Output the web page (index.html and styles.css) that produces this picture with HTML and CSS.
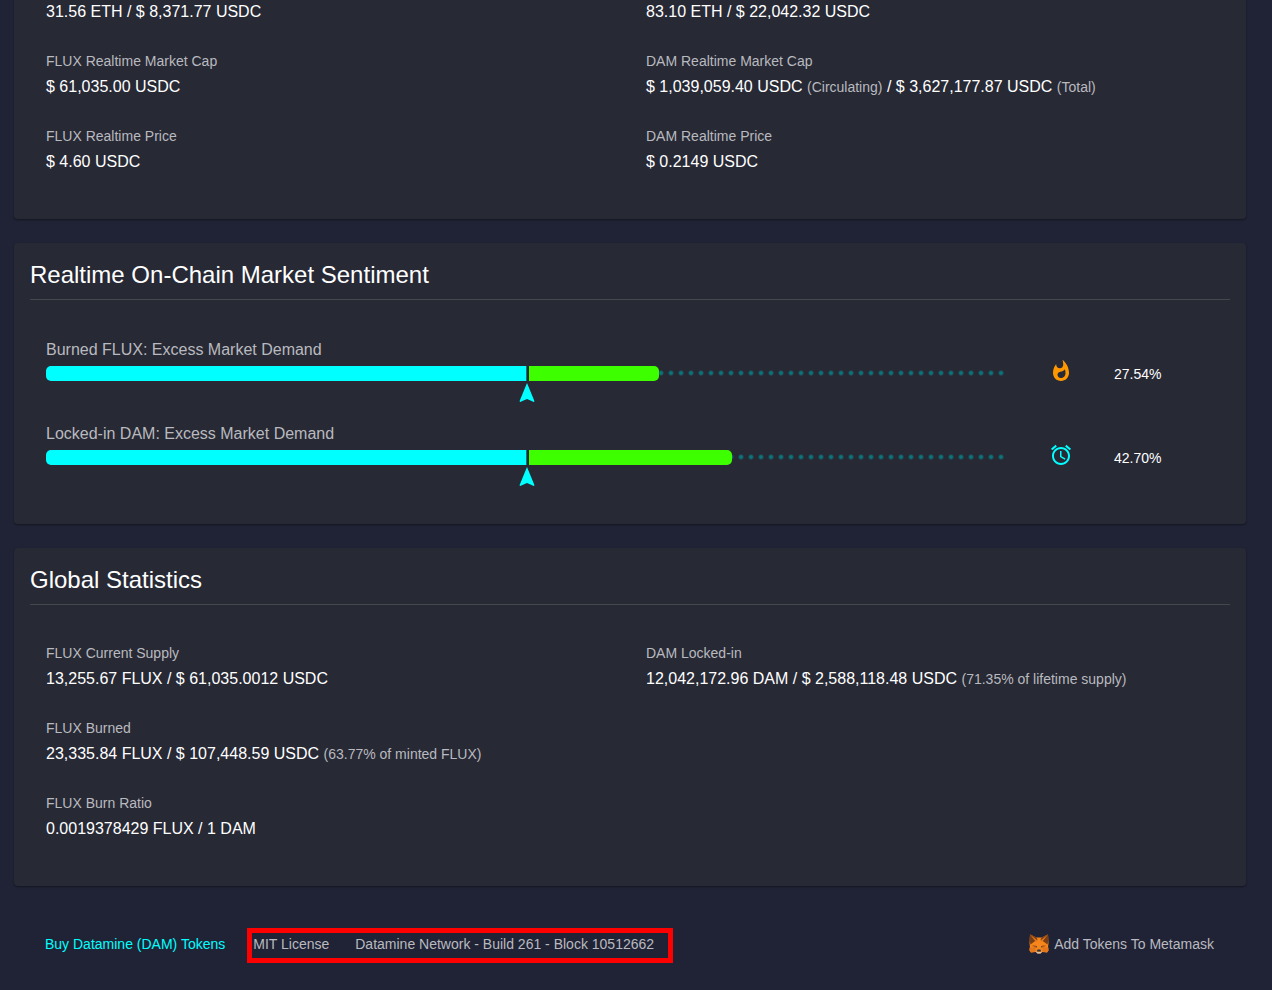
FILE: index.html
```html
<!DOCTYPE html>
<html lang="en">
<head>
<meta charset="utf-8">
<title>Datamine Network</title>
<link rel="stylesheet" href="styles.css">
</head>
<body>
<main class="page">
  <section class="card card-top">
    <div class="columns">
      <dl class="stats">
        <div class="stat"><dd>31.56 ETH / $ 8,371.77 USDC</dd></div>
        <div class="stat"><dt>FLUX Realtime Market Cap</dt><dd>$ 61,035.00 USDC</dd></div>
        <div class="stat"><dt>FLUX Realtime Price</dt><dd>$ 4.60 USDC</dd></div>
      </dl>
      <dl class="stats">
        <div class="stat"><dd>83.10 ETH / $ 22,042.32 USDC</dd></div>
        <div class="stat"><dt>DAM Realtime Market Cap</dt><dd>$ 1,039,059.40 USDC <small>(Circulating)</small> / $ 3,627,177.87 USDC <small>(Total)</small></dd></div>
        <div class="stat"><dt>DAM Realtime Price</dt><dd>$ 0.2149 USDC</dd></div>
      </dl>
    </div>
  </section>

  <section class="card">
    <h2 class="title">Realtime On-Chain Market Sentiment</h2>
    <div class="meters">
      <div class="meter">
        <h3 class="meter-label" id="burned">Burned FLUX: Excess Market Demand</h3>
        <div class="track" role="meter" aria-labelledby="burned" aria-valuemin="0" aria-valuemax="100" aria-valuenow="27.54">
          <div class="half base"></div>
          <div class="half"><div class="excess" style="width:27.54%"></div></div>
          <svg class="marker" viewBox="0 0 24 24" aria-hidden="true"><path d="M12 2L4.5 20.29l.71.71L12 18l6.79 3 .71-.71z"/></svg>
        </div>
        <svg class="icon flame" viewBox="0 0 24 24" aria-hidden="true"><path d="M13.5.67s.74 2.65.74 4.8c0 2.06-1.35 3.73-3.41 3.73-2.07 0-3.63-1.67-3.63-3.73l.03-.36C5.21 7.51 4 10.62 4 14c0 4.42 3.58 8 8 8s8-3.58 8-8C20 8.61 17.41 3.8 13.5.67zM11.71 19c-1.78 0-3.22-1.4-3.22-3.14 0-1.62 1.05-2.76 2.81-3.12 1.77-.36 3.6-1.21 4.62-2.58.39 1.29.59 2.65.59 4.04 0 2.65-2.15 4.8-4.8 4.8z"/></svg>
        <span class="percent">27.54%</span>
      </div>
      <div class="meter">
        <h3 class="meter-label" id="locked">Locked-in DAM: Excess Market Demand</h3>
        <div class="track" role="meter" aria-labelledby="locked" aria-valuemin="0" aria-valuemax="100" aria-valuenow="42.70">
          <div class="half base"></div>
          <div class="half"><div class="excess" style="width:42.7%"></div></div>
          <svg class="marker" viewBox="0 0 24 24" aria-hidden="true"><path d="M12 2L4.5 20.29l.71.71L12 18l6.79 3 .71-.71z"/></svg>
        </div>
        <svg class="icon clock" viewBox="0 0 24 24" aria-hidden="true"><path d="M22 5.72l-4.6-3.86-1.29 1.53 4.6 3.86L22 5.72zM7.88 3.39L6.6 1.86 2 5.71l1.29 1.53 4.59-3.85zM12.5 8H11v6l4.75 2.85.75-1.23-4-2.37V8zM12 4c-4.97 0-9 4.03-9 9s4.02 9 9 9c4.97 0 9-4.03 9-9s-4.03-9-9-9zm0 16c-3.87 0-7-3.13-7-7s3.13-7 7-7 7 3.13 7 7-3.13 7-7 7z"/></svg>
        <span class="percent">42.70%</span>
      </div>
    </div>
  </section>

  <section class="card">
    <h2 class="title">Global Statistics</h2>
    <div class="columns">
      <dl class="stats">
        <div class="stat"><dt>FLUX Current Supply</dt><dd>13,255.67 FLUX / $ 61,035.0012 USDC</dd></div>
        <div class="stat"><dt>FLUX Burned</dt><dd>23,335.84 FLUX / $ 107,448.59 USDC <small>(63.77% of minted FLUX)</small></dd></div>
        <div class="stat"><dt>FLUX Burn Ratio</dt><dd>0.0019378429 FLUX / 1 DAM</dd></div>
      </dl>
      <dl class="stats">
        <div class="stat"><dt>DAM Locked-in</dt><dd>12,042,172.96 DAM / $ 2,588,118.48 USDC <small>(71.35% of lifetime supply)</small></dd></div>
      </dl>
    </div>
  </section>
</main>

<footer class="footer">
  <a class="buy" href="#buy">Buy Datamine (DAM) Tokens</a>
  <div class="build">
    <a href="#license">MIT License</a>
    <span>Datamine Network - Build 261 - Block 10512662</span>
  </div>
  <button class="metamask" type="button">
    <svg class="fox" viewBox="0 0 40 40" aria-hidden="true">
      <path fill="#f6851b" d="M2 1l13 6h10l13-6 1 17-1 9 1 6-3 4-10-1-3 3h-6l-3-3-10 1-3-4 1-6-1-9z"/>
      <path fill="#763d16" d="M2 1l13 6 2 5-6 3-8 6-2-9zM38 1L25 7l-2 5 6 3 8 6 2-9z"/>
      <path fill="#e4761b" d="M2 1l15 12-3 3zM38 1L23 13l3 3z"/>
      <path fill="#e4761b" d="M1 27h11l2 8-10 2-3-4zM39 27H28l-2 8 10 2 3-4z"/>
      <path fill="#cd6116" d="M11 27l-6-4 9-1zM29 27l6-4-9-1z"/>
      <path fill="#233447" d="M11 26l4-2 1 3zM29 26l-4-2-1 3zM17 31h6l1 4h-8z"/>
      <path fill="#d7c1b3" d="M12 34l4 2h8l4-2-5 5h-6z"/>
    </svg>
    Add Tokens To Metamask
  </button>
</footer>
</body>
</html>
```
FILE: styles.css
```css
* { box-sizing: border-box; }

body {
  margin: 0;
  background: #202336;
  color: #fff;
  font: 16px/24px "Liberation Sans", Arial, sans-serif;
}

.page {
  display: flex;
  flex-direction: column;
  gap: 24px;
  padding: 0 26px 0 14px;
}

.card {
  padding: 16px;
  border-radius: 4px;
  background: #272935;
  box-shadow: 0 1px 2px rgba(0, 0, 0, 0.4);
}

.card-top {
  margin-top: -1px;
  padding-top: 0;
  border-radius: 0 0 4px 4px;
}

.title {
  margin: 0 0 24px;
  padding-bottom: 8px;
  border-bottom: 1px solid #45474f;
  font-size: 24px;
  line-height: 32px;
  font-weight: 400;
}

.columns {
  display: grid;
  grid-template-columns: 1fr 1fr;
}

.stats {
  display: flex;
  flex-direction: column;
  gap: 24px;
  margin: 0;
  padding: 12px 16px 28px;
}

.card-top .stats { padding-top: 0; }

dt {
  color: #b9babf;
  font-size: 14px;
  line-height: 25px;
}

dd {
  margin: 0;
  line-height: 26px;
}

small {
  color: #b9babf;
  font-size: 14px;
}

.meters {
  display: flex;
  flex-direction: column;
  gap: 16px;
  padding: 14px 16px 18px;
}

.meter {
  display: grid;
  grid-template-columns: minmax(0, 1fr) 106px 100px;
  grid-template-rows: 28px 40px;
}

.meter-label {
  grid-column: 1 / -1;
  margin: 0;
  color: #b9babf;
  font-size: 16px;
  font-weight: 400;
}

.track {
  position: relative;
  display: flex;
  height: 15px;
  border-radius: 5px;
  background: radial-gradient(#0b7478 0%, #0b7478 18%, transparent 44%) 0 2px / 10px 10px repeat-x;
}

.half { width: 50%; }

.base {
  border-right: 1px solid #15707a;
  border-radius: 5px 0 0 5px;
  background: #0ff;
  background-clip: padding-box;
}

.excess {
  height: 100%;
  border-left: 2px solid #272935;
  border-radius: 0 5px 5px 0;
  background: #3dff00;
}

.marker {
  position: absolute;
  top: 15px;
  left: calc(50% - 12px);
  width: 24px;
  height: 24px;
  fill: #0ff;
}

.icon {
  justify-self: center;
  width: 24px;
  height: 24px;
  margin-top: -7px;
}

.flame { fill: #ff9800; }
.clock { fill: #0ff; }

.percent {
  font-size: 14px;
  line-height: 16px;
}

.footer {
  display: flex;
  align-items: flex-start;
  padding: 42px 58px 24px 45px;
  color: #b9babf;
  font-size: 14px;
  line-height: 22px;
}

.footer a {
  color: inherit;
  text-decoration: none;
}

.footer .buy {
  padding-top: 5px;
  color: #0ff;
}

.build {
  display: flex;
  gap: 26px;
  margin-left: 22px;
  padding: 0 14px 3px 1px;
  border: 5px solid #f00;
}

.metamask {
  display: flex;
  align-items: center;
  gap: 5px;
  margin-left: auto;
  padding: 5px 0 0;
  border: 0;
  background: none;
  color: inherit;
  font: inherit;
}

.fox {
  width: 20px;
  height: 20px;
}
```
